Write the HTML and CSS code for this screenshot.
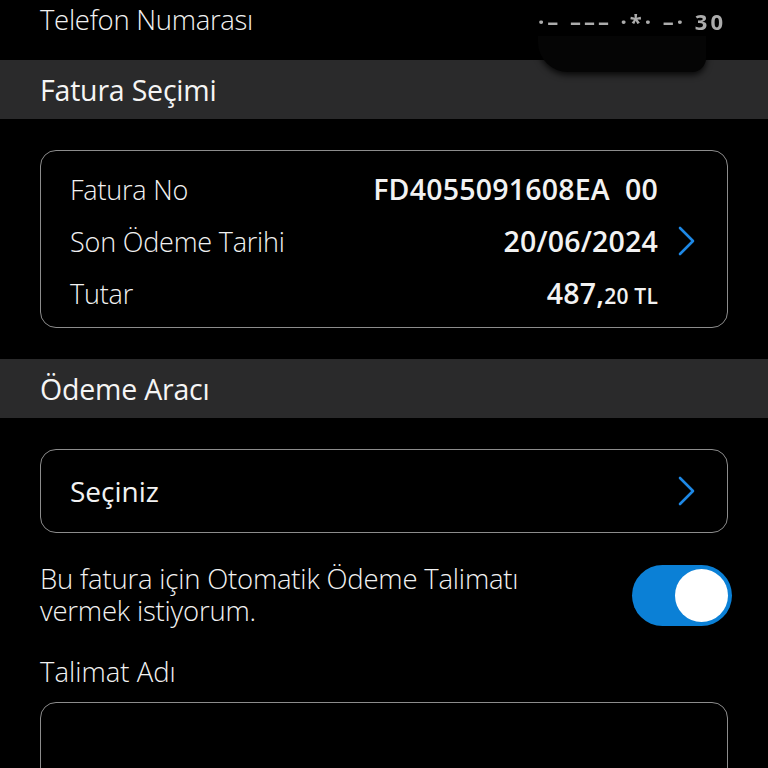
FILE: index.html
```html
<!DOCTYPE html>
<html lang="tr">
<head>
<meta charset="utf-8">
<link rel="stylesheet" href="styles.css">
</head>
<body>
<div class="screen">
  <div class="phone-row">
    <span class="label">Telefon Numarası</span>
    <span class="masked">·–  –––  ·*·  –·  30</span>
    <div class="smudge"></div>
  </div>

  <div class="section-head">Fatura Seçimi</div>

  <div class="card bill">
    <div class="row">
      <span class="label">Fatura No</span>
      <span class="value">FD4055091608EA&nbsp;&nbsp;00</span>
      <span class="chev-slot"></span>
    </div>
    <div class="row">
      <span class="label">Son Ödeme Tarihi</span>
      <span class="value">20/06/2024</span>
      <span class="chev-slot">
        <svg class="chev" viewBox="0 0 20 30" width="20" height="30"><path d="M3 2 L16 15 L3 28" fill="none" stroke="#1e88e5" stroke-width="2.6" stroke-linecap="round" stroke-linejoin="round"/></svg>
      </span>
    </div>
    <div class="row">
      <span class="label">Tutar</span>
      <span class="value">487,<small>20 TL</small></span>
      <span class="chev-slot"></span>
    </div>
  </div>

  <div class="section-head">Ödeme Aracı</div>

  <div class="card select">
    <span class="select-text">Seçiniz</span>
    <span class="chev-slot">
      <svg class="chev" viewBox="0 0 20 30" width="20" height="30"><path d="M3 2 L16 15 L3 28" fill="none" stroke="#1e88e5" stroke-width="2.6" stroke-linecap="round" stroke-linejoin="round"/></svg>
    </span>
  </div>

  <div class="toggle-row">
    <p class="toggle-text"><span class="tline">Bu fatura için Otomatik Ödeme Talimatı</span><span class="tline">vermek istiyorum.</span></p>
    <div class="toggle"><div class="knob"></div></div>
  </div>

  <div class="field-label">Talimat Adı</div>
  <div class="input-box"></div>
</div>
</body>
</html>
```

FILE: styles.css
```css
html, body {
  margin: 0;
  padding: 0;
  background: #000;
}
body {
  font-family: "Open Sans", "Noto Sans", "DejaVu Sans", sans-serif;
  color: #f2f2f2;
  overflow: hidden;
}
.screen {
  width: 768px;
  height: 768px;
  overflow: hidden;
  position: relative;
}
.phone-row {
  height: 60px;
  display: flex;
  justify-content: space-between;
  align-items: flex-start;
  padding: 4px 42px 0 40px;
  box-sizing: border-box;
  position: relative;
}
.phone-row .label {
  font-size: 27.5px;
  line-height: 32px;
  font-weight: 300;
  letter-spacing: -0.3px;
}
.masked {
  font-size: 22px;
  line-height: 30px;
  font-weight: 700;
  color: #d8d8d8;
  letter-spacing: 3px;
  opacity: 0.8;
  filter: blur(0.6px);
  margin-top: 2px;
}
.smudge {
  position: absolute;
  left: 538px;
  top: 36px;
  width: 168px;
  height: 36px;
  border-radius: 0 0 14px 30px;
  background: #050505;
  box-shadow: 0 3px 6px rgba(0,0,0,0.8);
  z-index: 2;
}
.section-head {
  height: 59px;
  background: #2a2a2b;
  padding-left: 40px;
  display: flex;
  align-items: center;
  font-size: 28.5px;
  font-weight: 400;
  letter-spacing: -0.2px;
  color: #f5f5f5;
}
.card {
  margin: 31px 40px;
  border: 1.5px solid #8c8c8c;
  border-radius: 16px;
  box-sizing: border-box;
}
.bill {
  height: 178px;
  padding: 12px 30px 10px 29px;
}
.row {
  height: 52px;
  display: flex;
  align-items: center;
}
.row .label {
  flex: 1;
  font-size: 27px;
  font-weight: 300;
  letter-spacing: -0.2px;
}
.row .value {
  font-size: 28.5px;
  font-weight: 600;
  letter-spacing: 0.2px;
  padding-right: 3px;
}
.row .value small {
  font-size: 21px;
  font-weight: 600;
}
.chev-slot {
  width: 20px;
  margin-left: 16px;
  display: flex;
  align-items: center;
}
.chev {
  display: block;
}
.select {
  height: 84px;
  padding: 0 30px 0 29px;
  display: flex;
  align-items: center;
  justify-content: space-between;
}
.select-text {
  font-size: 28px;
  font-weight: 500;
}
.toggle-row {
  display: flex;
  align-items: center;
  justify-content: space-between;
  padding: 0 36px 0 40px;
  margin-top: -1px;
}
.toggle-text {
  margin: 0;
  display: flex;
  flex-direction: column;
  font-size: 27.5px;
  font-weight: 300;
  letter-spacing: -0.2px;
}
.tline {
  display: block;
  line-height: 32px;
  height: 32px;
}
.toggle {
  width: 100px;
  height: 61px;
  border-radius: 31px;
  background: #0b80d6;
  display: flex;
  align-items: center;
  justify-content: flex-end;
  padding-right: 4px;
  box-sizing: border-box;
}
.knob {
  width: 53px;
  height: 53px;
  border-radius: 50%;
  background: #fff;
}
.field-label {
  margin-top: 29px;
  padding-left: 40px;
  font-size: 27.5px;
  line-height: 32px;
  font-weight: 300;
}
.input-box {
  margin: 14px 40px 0;
  height: 120px;
  border: 1.5px solid #8c8c8c;
  border-radius: 16px;
}
```
